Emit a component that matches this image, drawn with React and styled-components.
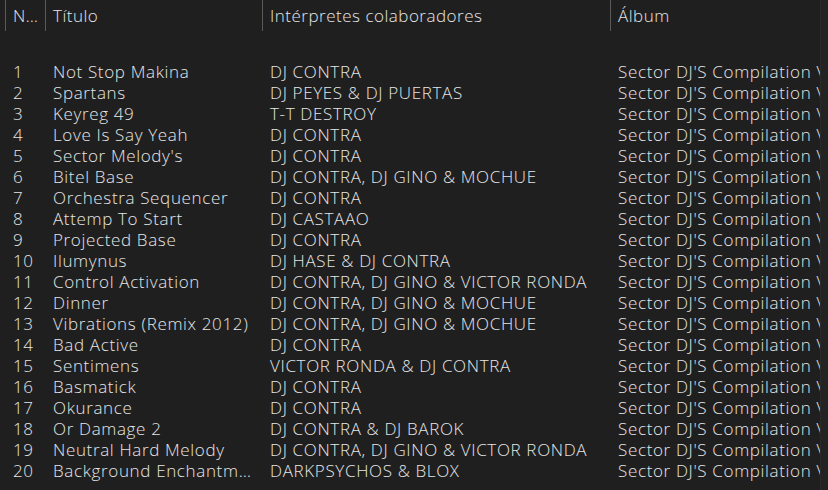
import React from 'react';
import styled, { createGlobalStyle } from 'styled-components';

const GlobalStyle = createGlobalStyle`
  html, body {
    margin: 0;
    padding: 0;
    background: #1f1f1f;
  }
  body {
    font-family: "Open Sans", "Noto Sans", sans-serif;
  }
`;

const tracks = [
  ['1', 'Not Stop Makina', 'DJ CONTRA'],
  ['2', 'Spartans', 'DJ PEYES & DJ PUERTAS'],
  ['3', 'Keyreg 49', 'T-T DESTROY'],
  ['4', 'Love Is Say Yeah', 'DJ CONTRA'],
  ['5', "Sector Melody's", 'DJ CONTRA'],
  ['6', 'Bitel Base', 'DJ CONTRA, DJ GINO & MOCHUE'],
  ['7', 'Orchestra Sequencer', 'DJ CONTRA'],
  ['8', 'Attemp To Start', 'DJ CASTAAO'],
  ['9', 'Projected Base', 'DJ CONTRA'],
  ['10', 'Ilumynus', 'DJ HASE & DJ CONTRA'],
  ['11', 'Control Activation', 'DJ CONTRA, DJ GINO & VICTOR RONDA'],
  ['12', 'Dinner', 'DJ CONTRA, DJ GINO & MOCHUE'],
  ['13', 'Vibrations (Remix 2012)', 'DJ CONTRA, DJ GINO & MOCHUE'],
  ['14', 'Bad Active', 'DJ CONTRA'],
  ['15', 'Sentimens', 'VICTOR RONDA & DJ CONTRA'],
  ['16', 'Basmatick', 'DJ CONTRA'],
  ['17', 'Okurance', 'DJ CONTRA'],
  ['18', 'Or Damage 2', 'DJ CONTRA & DJ BAROK'],
  ['19', 'Neutral Hard Melody', 'DJ CONTRA, DJ GINO & VICTOR RONDA'],
  ['20', 'Background Enchantment', 'DARKPSYCHOS & BLOX'],
];

const ALBUM = "Sector DJ'S Compilation Vol. 1";

const Window = styled.div`
  width: 828px;
  height: 490px;
  overflow: hidden;
  background: #1f1f1f;
  color: #e6e6e6;
  display: flex;
`;

const ListArea = styled.div`
  width: 820px;
  padding-left: 5px;
  box-sizing: border-box;
  overflow: hidden;
`;

const Gutter = styled.div`
  flex: 1;
  background: #232323;
  border-left: 1px solid #2a2a2a;
`;

const cols = '40px 217px 348px 300px';

const HeaderRow = styled.div`
  display: grid;
  grid-template-columns: ${cols};
  height: 32px;
  margin-bottom: 29px;
`;

const HeaderCell = styled.div`
  border-left: 1px solid #5a5a5a;
  padding: 0 6px 0 7px;
  height: 31px;
  line-height: 31px;
  font-size: 17px;
  font-weight: 300;
  letter-spacing: 0.5px;
  white-space: nowrap;
  overflow: hidden;
  text-overflow: ellipsis;
`;

const Row = styled.div`
  display: grid;
  grid-template-columns: ${cols};
  height: 21px;
  line-height: 21px;
`;

const Cell = styled.div`
  padding-left: 8px;
  padding-right: 6px;
  font-size: 17px;
  font-weight: 300;
  letter-spacing: 0.65px;
  white-space: nowrap;
  overflow: hidden;
  text-overflow: ${p => (p.$clip ? 'clip' : 'ellipsis')};
`;

export default function App() {
  return (
    <>
      <GlobalStyle />
      <Window>
        <ListArea>
          <HeaderRow>
            <HeaderCell>Número</HeaderCell>
            <HeaderCell>Título</HeaderCell>
            <HeaderCell>Intérpretes colaboradores</HeaderCell>
            <HeaderCell>Álbum</HeaderCell>
          </HeaderRow>
          {tracks.map(([n, title, artist]) => (
            <Row key={n}>
              <Cell>{n}</Cell>
              <Cell>{title}</Cell>
              <Cell>{artist}</Cell>
              <Cell $clip>{ALBUM}</Cell>
            </Row>
          ))}
        </ListArea>
        <Gutter />
      </Window>
    </>
  );
}
